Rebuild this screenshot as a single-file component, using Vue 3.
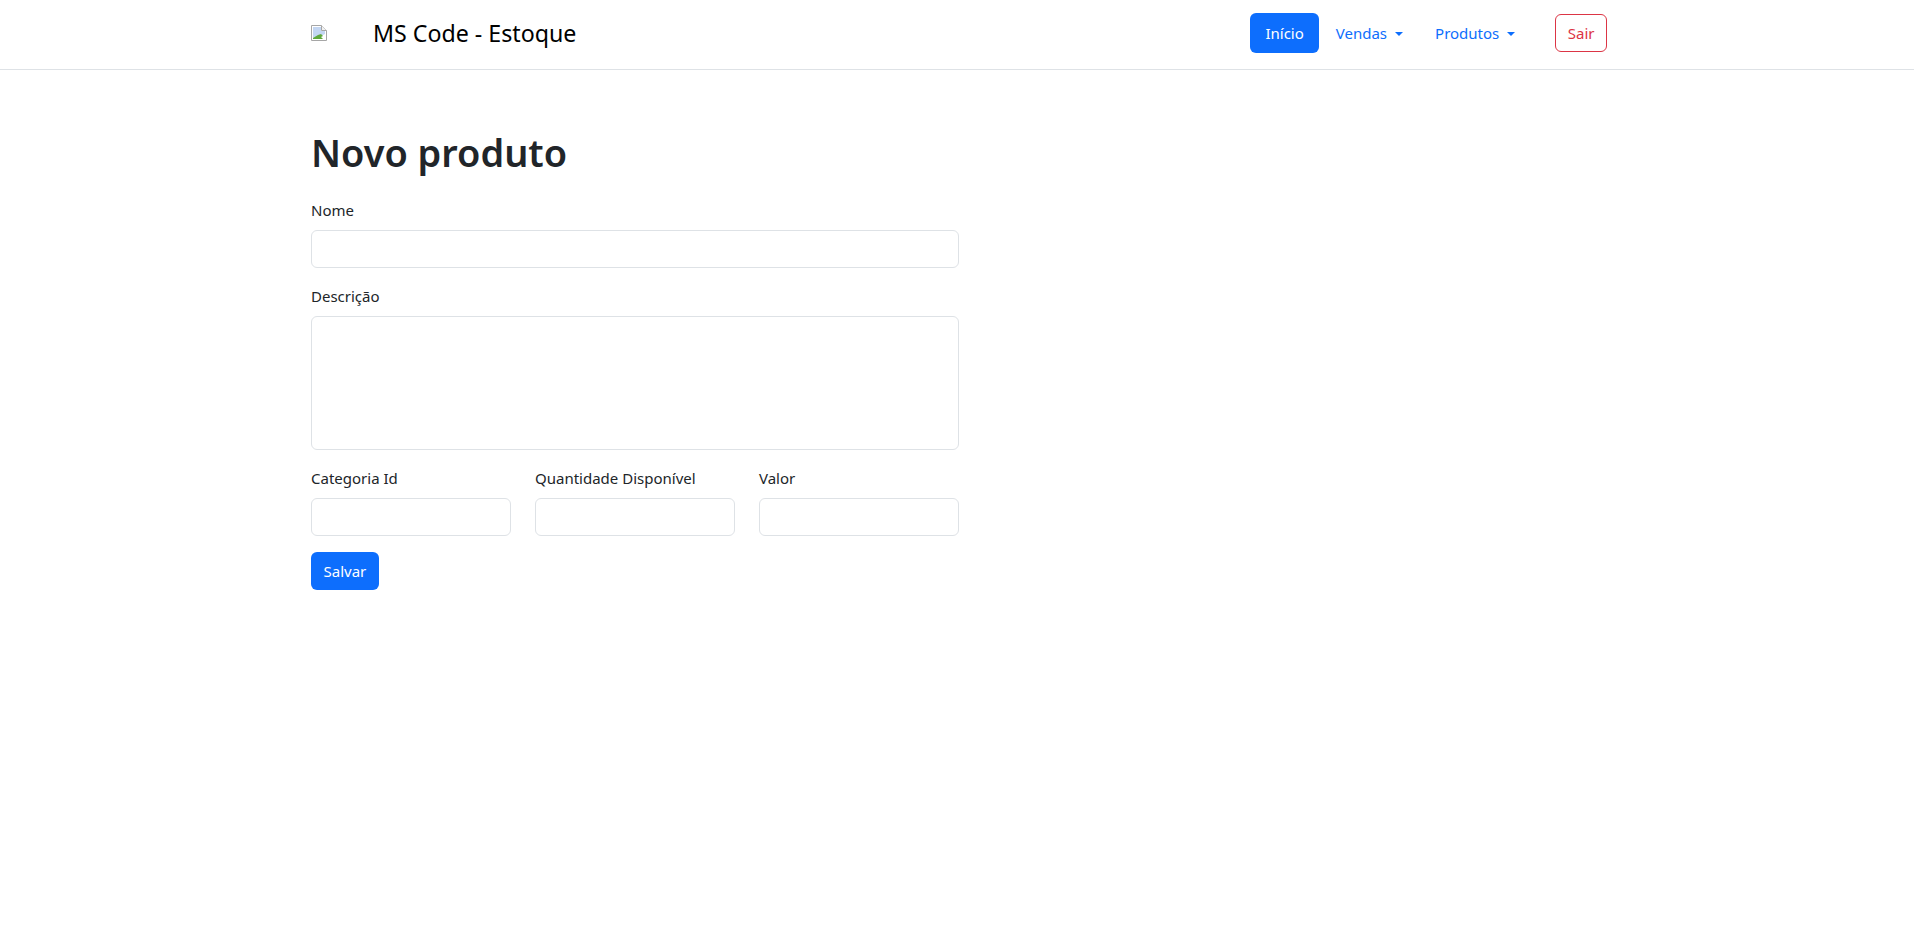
<script setup>
</script>

<template>
  <div class="page">
    <nav class="navbar">
      <div class="container nav-inner">
        <a class="brand">
          <span class="broken-img">
            <svg width="16" height="16" viewBox="0 0 16 16">
              <path d="M0.5 0.5h10l5 5v10h-15z" fill="#fff" stroke="#a6a6a6" />
              <path d="M2 2h8v4h4v3l-4 2-3 1-5 1z" fill="#c3d6f2" />
              <path d="M10.5 0.5v5h5" fill="#f2f2f2" stroke="#a6a6a6" />
              <path d="M2 14v-1l5-3 3-1 2 2-2 1 2 2z" fill="#5fa83c" />
            </svg>
          </span>
          <span class="brand-text">MS Code - Estoque</span>
        </a>
        <div class="nav-links">
          <a class="nav-link active">Início</a>
          <a class="nav-link drop">Vendas</a>
          <a class="nav-link drop">Produtos</a>
          <a class="btn-out">Sair</a>
        </div>
      </div>
    </nav>
    <main class="container content">
      <h1>Novo produto</h1>
      <form class="form">
        <div class="field">
          <label>Nome</label>
          <input type="text" />
        </div>
        <div class="field">
          <label>Descrição</label>
          <textarea></textarea>
        </div>
        <div class="row">
          <div class="field">
            <label>Categoria Id</label>
            <input type="text" />
          </div>
          <div class="field">
            <label>Quantidade Disponível</label>
            <input type="text" />
          </div>
          <div class="field">
            <label>Valor</label>
            <input type="text" />
          </div>
        </div>
        <button type="button" class="save">Salvar</button>
      </form>
    </main>
  </div>
</template>

<style>
html, body { margin: 0; background: #fff; }
</style>

<style scoped>
.page { font-family: "Noto Sans", "Open Sans", sans-serif; color: #212529; font-size: 16px; min-height: 937px; }
.container { width: 1320px; margin-left: 299px; padding: 0 12px; box-sizing: border-box; }
.navbar { height: 70px; border-bottom: 1px solid #dee2e6; box-sizing: border-box; }
.nav-inner { display: flex; justify-content: space-between; align-items: center; height: 100%; padding-bottom: 3px; }
.brand { display: flex; align-items: center; color: #000; font-size: 23.2px; line-height: 30px; }
.broken-img { width: 62px; height: 30px; display: block; }
.broken-img svg { display: block; margin-top: 7px; }
.nav-links { display: flex; align-items: center; font-size: 15px; }
.nav-link { color: #0d6efd; padding: 8px 16px; line-height: 24px; border-radius: 6px; }
.nav-link.active { background: #0d6efd; color: #fff; padding: 8px 15px; margin-right: 1px; }
.drop::after { content: ""; display: inline-block; margin-left: 8px; vertical-align: 3px; border-top: 4.8px solid; border-left: 4.8px solid transparent; border-right: 4.8px solid transparent; }
.btn-out { color: #dc3545; border: 1px solid #dc3545; border-radius: 6px; padding: 6px 11.5px; margin-left: 24px; line-height: 24px; }
.content { padding-top: 56px; }
h1 { margin: 0 0 23px; font-size: 37.9px; font-weight: 600; line-height: 52px; height: 49px; }
.form { width: 648px; font-size: 15px; }
.field { margin-bottom: 16px; }
label { display: block; margin-bottom: 8px; line-height: 24px; }
input, textarea { display: block; width: 100%; box-sizing: border-box; border: 1px solid #dee2e6; border-radius: 6px; height: 38px; }
textarea { height: 134px; resize: none; }
.row { display: grid; grid-template-columns: repeat(3, 1fr); gap: 24px; }
.save { display: block; background: #0d6efd; color: #fff; border: 0; border-radius: 6px; padding: 7px 12.5px; font: inherit; line-height: 24px; }
</style>
